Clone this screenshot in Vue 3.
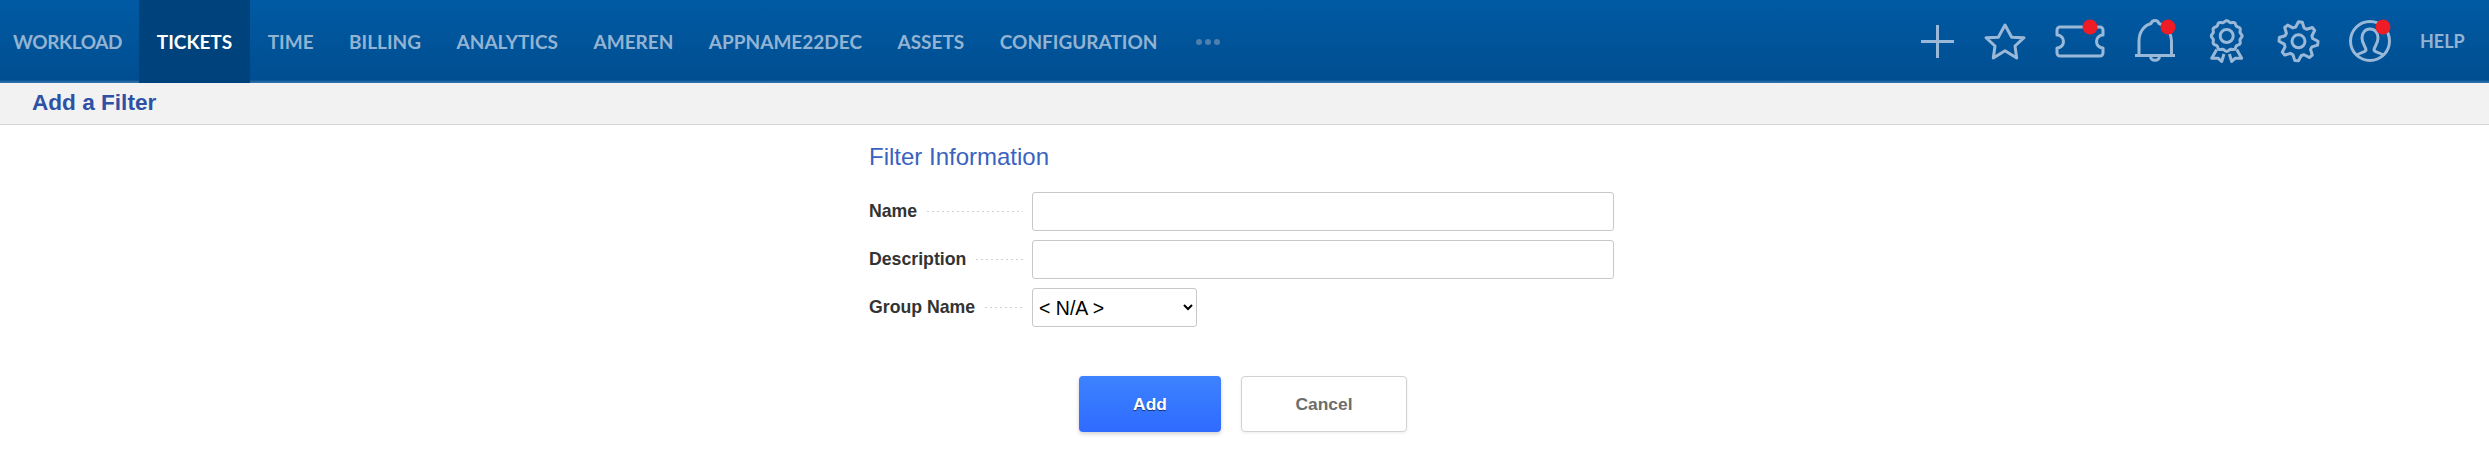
<template>
  <div class="page">
    <header class="topbar">
      <nav class="nav">
        <a
          v-for="item in navItems"
          :key="item"
          class="nav-item"
          :class="{ active: item === 'TICKETS' }"
        >{{ item }}</a>
        <span class="more"><i></i><i></i><i></i></span>
      </nav>
      <div class="tools">
        <svg class="tool" viewBox="0 0 72 82">
          <path d="M22 41.5H55M38.5 25V58" />
        </svg>
        <svg class="tool" viewBox="0 0 72 82">
          <path d="M34 25 40.7 37.3 53 37.7 44 46 45.7 58 34 50.7 22.3 58 24 46 15 37.7 27.3 37.3Z" />
        </svg>
        <svg class="tool" viewBox="0 0 72 82">
          <path d="M17 27H57a3 3 0 0 1 3 3v5a6.5 6.5 0 0 0 0 13v5a3 3 0 0 1-3 3H17a3 3 0 0 1-3-3v-5a6.5 6.5 0 0 0 0-13v-5a3 3 0 0 1 3-3Z" />
          <circle class="dot" cx="47" cy="27" r="7.5" />
        </svg>
        <svg class="tool" viewBox="0 0 72 82">
          <path d="M24 55.5V41C24 31 30 25 36 23.5a4.2 4.2 0 0 1 8 0C50 25 56 31 56.5 41V55.5M20 55.5H60M35.5 57a4.6 4.2 0 0 0 9 0" />
          <circle class="dot" cx="53" cy="27" r="7.5" />
        </svg>
        <svg class="tool" viewBox="0 0 72 82">
          <path :d="rosette" />
          <circle cx="39.7" cy="36" r="6.5" />
          <path d="M29.7 49.5 24.7 58.3H31.3L34.7 61.5 37 54M49.7 49.5 54.7 58.3H48.1L44.7 61.5 42.4 54" />
        </svg>
        <svg class="tool" viewBox="0 0 72 82">
          <path :d="gear" />
          <circle cx="39.5" cy="41.3" r="6.5" />
        </svg>
        <svg class="tool" viewBox="0 0 72 82">
          <circle cx="39" cy="41" r="19.5" />
          <path d="M25 56C28 52 34 53 35 50 35 47 31 44 31 38 31 33 34 29 39 29 44 29 47 33 47 38 47 44 43 47 43 50 44 53 50 52 53 56" />
          <circle class="dot" cx="52" cy="27" r="7.5" />
        </svg>
        <a class="help">HELP</a>
      </div>
    </header>

    <div class="subbar">
      <h1>Add a Filter</h1>
    </div>

    <main class="content">
      <h2>Filter Information</h2>
      <div class="rows">
        <div class="row">
          <div class="label-cell">
            <label>Name</label>
            <span class="leader"></span>
          </div>
          <input type="text" />
        </div>
        <div class="row">
          <div class="label-cell">
            <label>Description</label>
            <span class="leader"></span>
          </div>
          <input type="text" />
        </div>
        <div class="row">
          <div class="label-cell">
            <label>Group Name</label>
            <span class="leader"></span>
          </div>
          <select>
            <option>&lt; N/A &gt;</option>
          </select>
        </div>
      </div>
      <div class="actions">
        <button class="btn primary">Add</button>
        <button class="btn">Cancel</button>
      </div>
    </main>
  </div>
</template>

<script setup>
const navItems = [
  'WORKLOAD',
  'TICKETS',
  'TIME',
  'BILLING',
  'ANALYTICS',
  'AMEREN',
  'APPNAME22DEC',
  'ASSETS',
  'CONFIGURATION'
]

// gear outline: swings between two radii around a centre
const ring = (cx, cy, outer, inner, count, steps) => {
  const pts = []
  const total = count * steps
  for (let i = 0; i < total; i++) {
    const a = (i / total) * Math.PI * 2 - Math.PI / 2
    const t = (i % steps) / steps
    const r = t < 0.5 ? outer : inner
    pts.push(`${(cx + r * Math.cos(a)).toFixed(2)} ${(cy + r * Math.sin(a)).toFixed(2)}`)
  }
  return `M${pts.join('L')}Z`
}

const rosette = (() => {
  const pts = []
  for (let i = 0; i < 96; i++) {
    const a = (i / 96) * Math.PI * 2
    const r = 14.6 + 0.8 * Math.cos(a * 12)
    pts.push(`${(39.7 + r * Math.cos(a)).toFixed(2)} ${(36 + r * Math.sin(a)).toFixed(2)}`)
  }
  return `M${pts.join('L')}Z`
})()

const gear = ring(39.5, 41.3, 19.5, 14.5, 8, 4)
</script>

<style>
html,
body {
  margin: 0;
  background: #fff;
}
</style>

<style scoped>
.page {
  min-height: 461px;
  background: #fff;
  font-family: "Liberation Sans", Arial, sans-serif;
}

.topbar {
  display: flex;
  justify-content: space-between;
  height: 83px;
  background: linear-gradient(#005aa3, #004e91 96%, #3a77ae);
}

.nav {
  display: flex;
  align-items: stretch;
}

.nav-item {
  display: flex;
  align-items: center;
  padding: 0 17.75px;
  color: #93b3d3;
  font-family: Lato, "Liberation Sans", sans-serif;
  font-size: 19px;
  font-weight: 700;
  white-space: nowrap;
}

.nav-item:first-child {
  padding-left: 13px;
  padding-right: 17px;
  letter-spacing: -0.4px;
}

.nav-item.active {
  color: #fff;
  background: #00427b;
}

.more {
  display: flex;
  align-items: center;
  gap: 3px;
  margin-left: 21px;
}

.more i {
  width: 6px;
  height: 6px;
  border-radius: 50%;
  background: #4d80ae;
}

.tools {
  display: flex;
  align-items: flex-start;
}

.tool {
  width: 72px;
  height: 82px;
  fill: none;
  stroke: #9ab9d8;
  stroke-width: 3;
  stroke-linejoin: round;
}

.dot {
  fill: #ee1c25;
  stroke: none;
}

.help {
  width: 69px;
  padding-left: 17px;
  color: #93b3d3;
  font-family: Lato, "Liberation Sans", sans-serif;
  font-size: 18px;
  font-weight: 700;
  line-height: 83px;
}

.subbar {
  height: 41px;
  padding-left: 32px;
  background: #f2f2f2;
  border-bottom: 1.5px solid #d4d4d4;
}

h1 {
  margin: 0;
  color: #2e51a5;
  font-size: 22.6px;
  font-weight: 700;
  line-height: 39px;
}

.content {
  width: 745px;
  margin-left: 869px;
}

h2 {
  margin: 0;
  padding-top: 19px;
  color: #3a62c0;
  font-size: 24px;
  font-weight: 400;
  line-height: 26px;
}

.rows {
  display: flex;
  flex-direction: column;
  gap: 9px;
  margin-top: 22px;
}

.row {
  display: flex;
  align-items: center;
  height: 39px;
}

.label-cell {
  display: flex;
  flex: none;
  align-items: center;
  width: 163px;
}

label {
  color: #333;
  font-size: 17.7px;
  font-weight: 700;
  white-space: nowrap;
}

.leader {
  flex: 1;
  height: 1px;
  margin: 0 9px 0 10px;
  background: repeating-linear-gradient(90deg, #d2d2d2 0 2px, transparent 2px 5px);
}

input,
select {
  box-sizing: border-box;
  height: 39px;
  background: #fff;
  border: 1.5px solid #c8c8c8;
  border-radius: 3px;
}

input {
  width: 582px;
}

select {
  width: 165px;
  padding-left: 2px;
  color: #000;
  font-family: "Liberation Sans", Arial, sans-serif;
  font-size: 19.5px;
}

.actions {
  display: flex;
  gap: 20px;
  margin: 49px 0 0 210px;
}

.btn {
  box-sizing: border-box;
  width: 166px;
  height: 56px;
  color: #6d6d6d;
  background: #fff;
  border: 1.5px solid #d2d2d2;
  border-radius: 4px;
  box-shadow: 0 1px 3px rgba(0, 0, 0, 0.08);
  font-family: "Liberation Sans", Arial, sans-serif;
  font-size: 17.4px;
  font-weight: 700;
}

.btn.primary {
  width: 142px;
  color: #fff;
  background: linear-gradient(#3d82ff, #2f6bff);
  border: none;
  box-shadow: 0 2px 4px rgba(0, 0, 0, 0.18);
  text-shadow: 0 1px 1px rgba(0, 0, 0, 0.6);
}
</style>
